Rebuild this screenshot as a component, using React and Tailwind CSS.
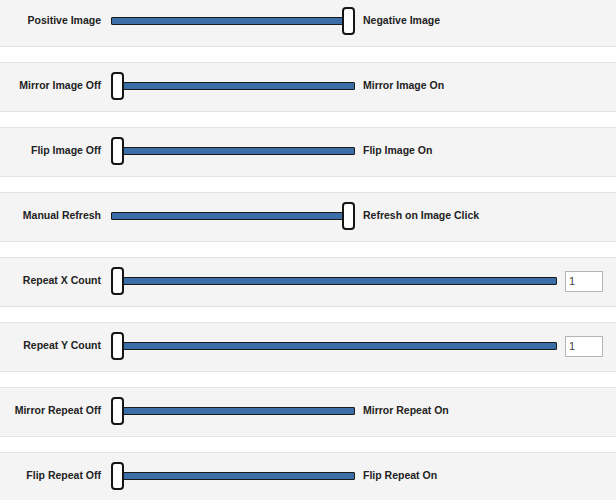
import React from "react";

const rows = [
  { left: "Positive Image", right: "Negative Image", value: 1 },
  { left: "Mirror Image Off", right: "Mirror Image On", value: 0 },
  { left: "Flip Image Off", right: "Flip Image On", value: 0 },
  { left: "Manual Refresh", right: "Refresh on Image Click", value: 1 },
  { left: "Repeat X Count", input: "1", value: 0 },
  { left: "Repeat Y Count", input: "1", value: 0 },
  { left: "Mirror Repeat Off", right: "Mirror Repeat On", value: 0 },
  { left: "Flip Repeat Off", right: "Flip Repeat On", value: 0 },
];

function Slider({ wide, value }) {
  return (
    <div className={`relative ml-[10px] flex h-[28px] items-center ${wide ? "w-[446px]" : "w-[244px]"}`}>
      <div className="h-[8px] w-full rounded-[1px] border border-[#1b1b1b] bg-[#3b6ea6]" />
      <div
        className={`absolute top-0 h-[28px] w-[13px] rounded-[4px] border-2 border-[#151515] bg-white ${
          value ? "right-0" : "left-0"
        }`}
      />
    </div>
  );
}

export default function App() {
  return (
    <div
      className="mt-[-3px] w-[616px] text-[10.5px] text-[#222]"
      style={{ fontFamily: '"Liberation Sans", Arial, sans-serif' }}
    >
      {rows.map((r, i) => (
        <div
          key={i}
          className="mb-[15px] flex h-[50px] items-center border-y border-[#e3e3e3] bg-[#f4f4f4] pb-[2px]"
        >
          <div className="w-[101px] text-right font-bold">{r.left}</div>
          <Slider wide={!!r.input} value={r.value} />
          {r.input ? (
            <div className="ml-[8px] flex h-[21px] w-[38px] items-center border border-[#b5b5b5] bg-white pl-[3px] text-[11px] text-[#444]">
              {r.input}
            </div>
          ) : (
            <div className="ml-[8px] font-bold">{r.right}</div>
          )}
        </div>
      ))}
    </div>
  );
}
